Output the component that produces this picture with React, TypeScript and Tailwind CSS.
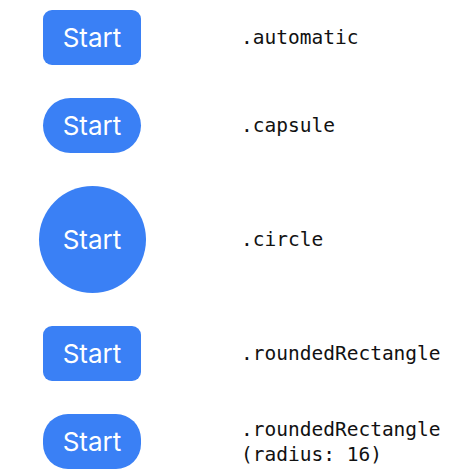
import React from "react";

type Row = {
  shape: "auto" | "capsule" | "circle" | "rounded" | "radius16";
  label: string[];
};

const rows: Row[] = [
  { shape: "auto", label: [".automatic"] },
  { shape: "capsule", label: [".capsule"] },
  { shape: "circle", label: [".circle"] },
  { shape: "rounded", label: [".roundedRectangle"] },
  { shape: "radius16", label: [".roundedRectangle", "(radius: 16)"] },
];

const shapeClass: Record<Row["shape"], string> = {
  auto: "w-[98px] h-[55px] rounded-[9px]",
  capsule: "w-[98px] h-[55px] rounded-full",
  circle: "w-[107px] h-[107px] rounded-full",
  rounded: "w-[98px] h-[55px] rounded-[9px]",
  radius16: "w-[98px] h-[55px] rounded-[25px]",
};

function StartButton({ shape }: { shape: Row["shape"] }) {
  return (
    <div
      className={`${shapeClass[shape]} bg-[#3a80f5] flex items-center justify-center text-white text-[26px] leading-none`}
      style={{ fontFamily: "Inter, 'Noto Sans', sans-serif" }}
    >
      Start
    </div>
  );
}

export default function App() {
  return (
    <div className="w-[474px] h-[474px] bg-white flex flex-col gap-[33px] pt-[10px]">
      {rows.map((r, i) => (
        <div key={i} className="flex items-center">
          <div className="w-[184px] flex justify-center">
            <StartButton shape={r.shape} />
          </div>
          <div
            className="ml-[57px] text-[19.5px] leading-[25px] text-[#111]"
            style={{ fontFamily: "'DejaVu Sans Mono', monospace" }}
          >
            {r.label.map((l, j) => (
              <div key={j} className="whitespace-pre">
                {l}
              </div>
            ))}
          </div>
        </div>
      ))}
    </div>
  );
}
